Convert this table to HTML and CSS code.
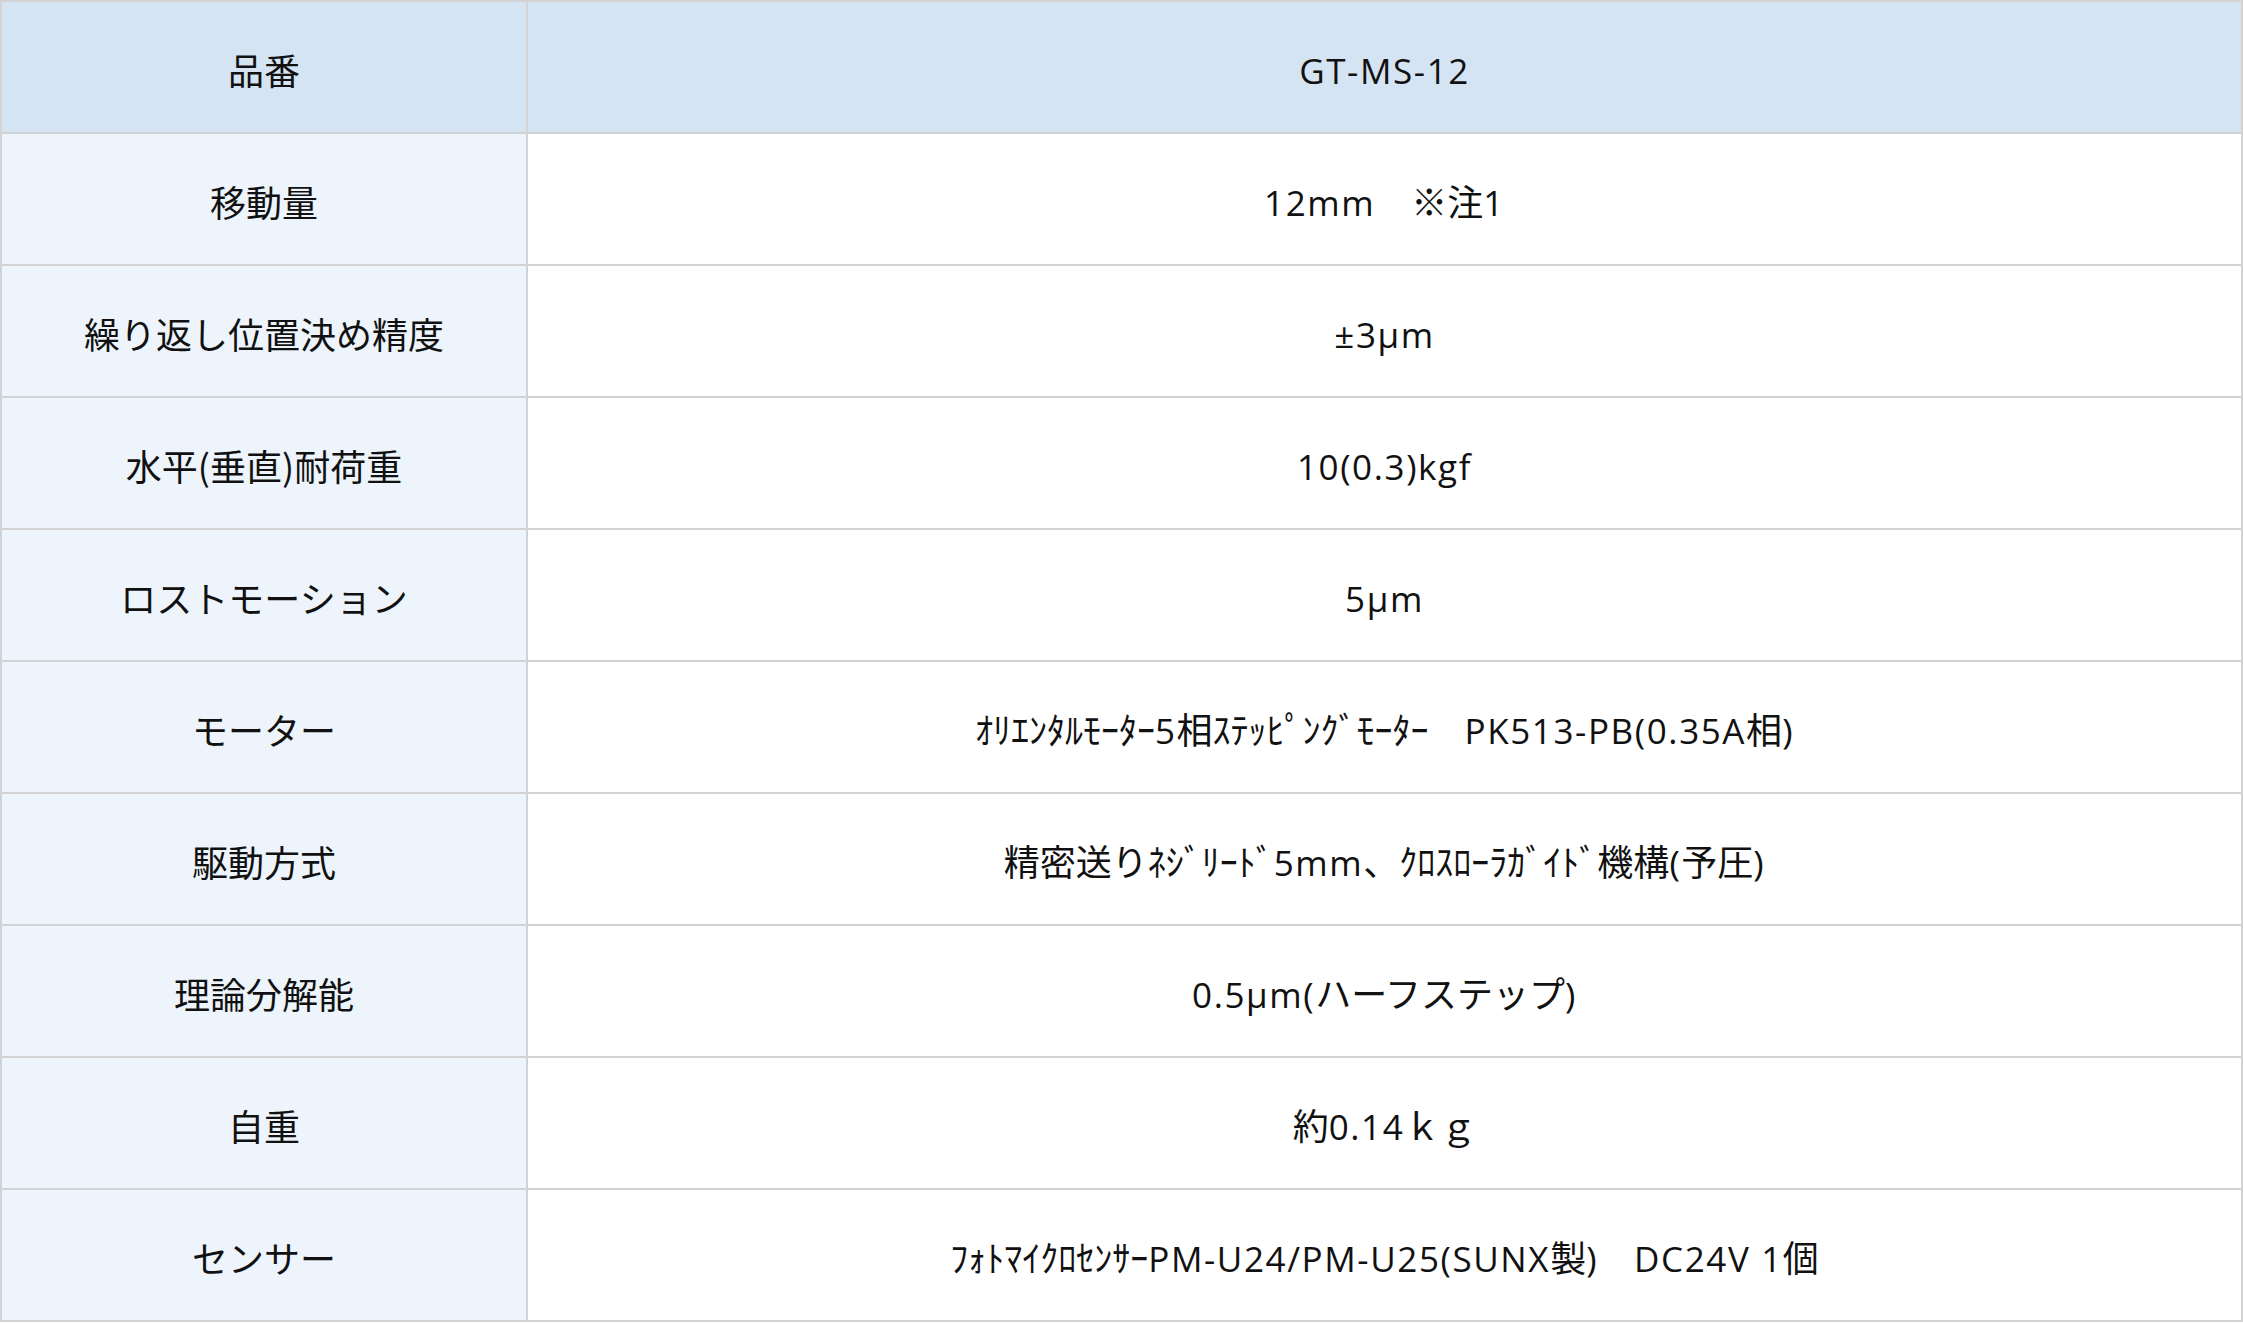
FILE: index.html
```html
<!DOCTYPE html>
<html lang="ja">
<head>
<meta charset="utf-8">
<title>GT-MS-12 仕様</title>
<link rel="stylesheet" href="styles.css">
</head>
<body>
<table class="spec">
  <colgroup>
    <col class="col-label">
    <col class="col-value">
  </colgroup>
  <thead>
    <tr class="head">
      <th>品番</th>
      <th><span class="lat">GT-MS-12</span></th>
    </tr>
  </thead>
  <tbody>
    <tr><th>移動量</th><td><span class="lat">12mm</span>　※注<span class="lat">1</span></td></tr>
    <tr><th>繰り返し位置決め精度</th><td><span class="lat">±3μm</span></td></tr>
    <tr><th>水平(垂直)耐荷重</th><td><span class="lat">10(0.3)kgf</span></td></tr>
    <tr><th>ロストモーション</th><td><span class="lat">5μm</span></td></tr>
    <tr><th>モーター</th><td>ｵﾘｴﾝﾀﾙﾓｰﾀｰ<span class="lat">5</span>相ｽﾃｯﾋﾟﾝｸﾞﾓｰﾀｰ　<span class="lat">PK513-PB(0.35A</span>相<span class="lat">)</span></td></tr>
    <tr><th>駆動方式</th><td>精密送りﾈｼﾞﾘｰﾄﾞ<span class="lat">5mm</span>、ｸﾛｽﾛｰﾗｶﾞｲﾄﾞ機構<span class="lat">(</span>予圧<span class="lat">)</span></td></tr>
    <tr><th>理論分解能</th><td><span class="lat">0.5μm(</span>ハーフステップ<span class="lat">)</span></td></tr>
    <tr><th>自重</th><td>約<span class="lat">0.14</span>ｋｇ</td></tr>
    <tr><th>センサー</th><td>ﾌｫﾄﾏｲｸﾛｾﾝｻｰ<span class="lat">PM-U24/PM-U25(SUNX</span>製<span class="lat">)</span>　<span class="lat">DC24V 1</span>個</td></tr>
  </tbody>
</table>
</body>
</html>
```

FILE: styles.css
```css
html, body {
  margin: 0;
  padding: 0;
  background: #ffffff;
}

body {
  font-family: "Noto Sans CJK JP", "Noto Sans", sans-serif;
  color: #111111;
}

.spec {
  width: 2243px;
  border-collapse: collapse;
  table-layout: fixed;
}

.col-label {
  width: 526px;
}

.spec th,
.spec td {
  border: 2px solid #d3d3d3;
  height: 126px;
  padding: 4px 10px 0;
  text-align: center;
  vertical-align: middle;
  font-size: 36px;
  font-weight: 400;
  line-height: 1.4;
  white-space: nowrap;
}

.lat {
  font-family: "Open Sans", "Noto Sans", sans-serif;
  font-size: 35px;
  letter-spacing: 1.6px;
}

.spec tbody th {
  background: #edf4fb;
}

.spec tbody td {
  background: #ffffff;
}

.spec .head th {
  background: #d4e4f2;
}
```
